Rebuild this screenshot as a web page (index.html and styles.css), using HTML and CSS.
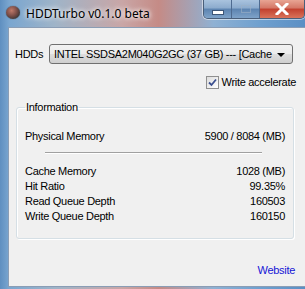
FILE: index.html
```html
<!DOCTYPE html>
<html>
<head>
<meta charset="utf-8">
<link rel="stylesheet" href="styles.css">
</head>
<body>
  <div class="window">
    <div class="titlebar">
      <div class="app-icon"></div>
      <div class="title">HDDTurbo v0.1.0 beta</div>
      <div class="caption-btns">
        <div class="cbtn cbtn-min"><span class="min-bar"></span></div>
        <div class="cbtn cbtn-max"><span class="max-box"></span></div>
        <div class="cbtn cbtn-close">
          <svg width="14" height="12" viewBox="0 0 14 12">
            <path d="M2 1 L12 11 M12 1 L2 11" stroke="#fff" stroke-width="3" stroke-linecap="square"/>
          </svg>
        </div>
      </div>
    </div>
    <div class="client">
      <div class="hdd-row">
        <label class="lbl">HDDs</label>
        <div class="combo">
          <span class="combo-text">INTEL SSDSA2M040G2GC (37 GB) --- [Cache</span>
          <span class="combo-arrow"></span>
        </div>
      </div>
      <div class="check-row">
        <span class="checkbox">
          <svg width="9" height="9" viewBox="0 0 9 9">
            <path d="M1 4.5 L3.5 7 L8 1.5" stroke="#3b4f8f" stroke-width="1.8" fill="none"/>
          </svg>
        </span>
        <span class="check-lbl">Write accelerate</span>
      </div>
      <fieldset class="group">
        <legend>Information</legend>
        <div class="info-row first"><span>Physical Memory</span><span>5900 / 8084 (MB)</span></div>
        <div class="sep"></div>
        <div class="info-row"><span>Cache Memory</span><span>1028 (MB)</span></div>
        <div class="info-row"><span>Hit Ratio</span><span>99.35%</span></div>
        <div class="info-row"><span>Read Queue Depth</span><span>160503</span></div>
        <div class="info-row"><span>Write Queue Depth</span><span>160150</span></div>
      </fieldset>
      <div class="link-row"><a class="link" href="#">Website</a></div>
    </div>
  </div>
</body>
</html>
```
FILE: styles.css
```css
html, body{
  margin: 0;
  padding: 0;
}

body{
  width: 305px;
  height: 289px;
  overflow: hidden;
  font-family: "Liberation Sans", Arial, sans-serif;
  font-size: 11px;
  letter-spacing: -0.3px;
  color: #000;
}

.window{
  width: 305px;
  height: 289px;
  background: linear-gradient(90deg, #5f8fc0 0%, #7aa6d0 3%, #9fb4c8 18%, #c9a6a6 40%, #c58b86 52%, #8fb1d3 70%, #6fa0cf 85%, #5b8fc4 100%);
  display: flex;
  flex-direction: column;
}

.titlebar{
  height: 27px;
  display: flex;
  align-items: flex-start;
  position: relative;
}

.app-icon{
  width: 14px;
  height: 13px;
  margin: 6px 0 0 6px;
  border-radius: 50%;
  background: radial-gradient(circle at 40% 35%, #c07a6a 0%, #7a4d47 45%, #333 80%);
  box-shadow: 0 0 1px #222;
}

.title{
  margin: 5px 0 0 6px;
  font-family: "Noto Sans", sans-serif;
  font-size: 12px;
  letter-spacing: 0;
  color: #000;
  text-shadow: 0 0 6px #fff, 0 0 4px #fff;
}

.caption-btns{
  position: absolute;
  left: 203px;
  top: 0;
  height: 18px;
  display: flex;
  border: 1px solid #4a5f7a;
  border-top: none;
  border-radius: 0 0 5px 5px;
  overflow: hidden;
  box-shadow: 0 0 0 1px rgba(255,255,255,0.5);
}

.cbtn{
  height: 18px;
  display: flex;
  align-items: center;
  justify-content: center;
}

.cbtn-min, .cbtn-max{
  width: 27px;
  background: linear-gradient(#a9c3de 0%, #8cabcd 45%, #5c83b0 50%, #7ea3c9 100%);
  border-right: 1px solid #4e6b90;
}

.cbtn-close{
  width: 44px;
  background: linear-gradient(#e8a493 0%, #d47766 45%, #c2402e 50%, #d9735a 100%);
}

.min-bar{
  width: 10px;
  height: 3px;
  margin-top: 6px;
  background: #fff;
  border: 1px solid #3d5677;
}

.max-box{
  width: 8px;
  height: 6px;
  border: 1px solid #9db0c7;
  background: transparent;
  opacity: 0.6;
}

.client{
  flex: 1;
  margin: 0 0 2px 8px;
  background: #f0f0f0;
  border-top: 1px solid #8a9db5;
  border-left: 1px solid #8a9db5;
  border-bottom: 1px solid #8a9db5;
  display: flex;
  flex-direction: column;
}

.hdd-row{
  display: flex;
  align-items: center;
  margin-top: 16px;
  padding-left: 6px;
}

.lbl{
  width: 34px;
}

.combo{
  width: 244px;
  height: 20px;
  box-sizing: border-box;
  border: 1px solid #707070;
  border-radius: 3px;
  background: linear-gradient(#f2f2f2 0%, #ebebeb 50%, #dddddd 51%, #cfcfcf 100%);
  display: flex;
  align-items: center;
  position: relative;
  overflow: hidden;
}

.combo-text{
  padding-left: 4px;
  white-space: nowrap;
}

.combo-arrow{
  position: absolute;
  right: 7px;
  top: 8px;
  width: 0;
  height: 0;
  border-left: 4px solid transparent;
  border-right: 4px solid transparent;
  border-top: 4px solid #000;
}

.check-row{
  display: flex;
  align-items: center;
  justify-content: flex-end;
  margin-top: 12px;
  padding-right: 9px;
}

.checkbox{
  width: 13px;
  height: 13px;
  box-sizing: border-box;
  border: 1px solid #8f8f8f;
  background: linear-gradient(135deg, #dcdcdc, #ffffff);
  display: flex;
  align-items: center;
  justify-content: center;
  margin-right: 3px;
}

.check-lbl{
  line-height: 13px;
}

.group{
  margin: 13px 0 0 7px;
  width: 278px;
  height: 137px;
  box-sizing: border-box;
  border: 1px solid #d5dfe5;
  border-radius: 3px;
  box-shadow: inset 1px 1px 0 #fff, 1px 1px 0 #fff;
  padding: 0 8px 0 8px;
}

.group legend{
  padding: 0 1px;
  margin-left: 0;
  line-height: 11px;
}

.info-row{
  display: flex;
  justify-content: space-between;
  line-height: 15px;
}

.info-row.first{
  margin-top: 16px;
}

.sep{
  height: 1px;
  background: #a0a0a0;
  border-bottom: 1px solid #fff;
  margin: 8px 23px 10px 20px;
}

.link-row{
  display: flex;
  justify-content: flex-end;
  margin-top: 25px;
  padding-right: 10px;
}

.link{
  color: #1515d6;
  text-decoration: none;
}
```
